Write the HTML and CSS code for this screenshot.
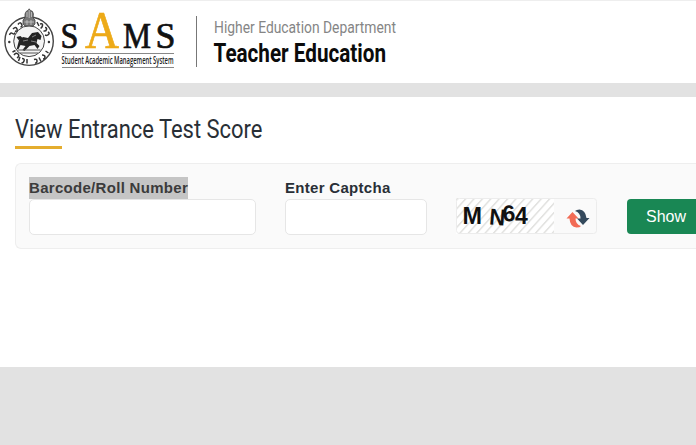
FILE: index.html
```
<!DOCTYPE html>
<html lang="en">
<head>
<meta charset="utf-8">
<title>Teacher Education - SAMS</title>
<link rel="stylesheet" href="styles.css">
</head>
<body>
<header class="header">
  <svg class="emblem" viewBox="0 0 54 62" width="54" height="62" aria-label="Emblem">
    <circle cx="27.1" cy="34.2" r="24.2" fill="#fff" stroke="#444" stroke-width="1.4"/>
    <circle cx="27.1" cy="34.2" r="15.4" fill="#f4f4f4" stroke="#444" stroke-width="1"/>
    <g fill="none" stroke="#333" stroke-width="1.5">
      <path d="M7.500 28q1-3 3-1.500t2.500-1M11 22q3-3 4 0t-2 2M16 17.500q2-3 3.500-.5t-1 3M35 15l2 4M38 17q3-1 2.500 1.500t-2 2.500M43 20.500q2 0 1.500 2t-3 1.500M46 25q2 1 .5 2.500t-3.500 .5"/>
      <path d="M10.500 45l3-1.500M12 48q2-3 4-1t-1 4M18 50l-1.500 4M20 51.500q3 0 2 2.500t-2.500 1.500M25 52v4.500M32 52.500q3-1 3 1.500t-2 2M37 50.500l2 4M40 48q3 0 3 2t-2 2M43.500 44l3 2"/>
    </g>
    <circle cx="7.300" cy="35" r="1.2" fill="#333"/><circle cx="46.900" cy="35" r="1.2" fill="#333"/>
    <path d="M23 7q1-3.500 3-3.500l1.200-1.700 1.200 1.700q2.600 0 3 3.500l-.4 4 2 2v4l-2 2h-8l-2-2v-4l2-2z" fill="#777" stroke="#444" stroke-width=".8"/>
    <path d="M25 5v5M27.200 3v8M29.500 5v5M22.500 15h9.500M25 13v5M29 13v5" stroke="#ccc" stroke-width=".8"/>
    <path d="M15 41l2-8 4-3 5 1 4-5 6-1 3.500 4-1 4-3-1-1 4 3 3-2 3-3-4-5 1-5 5-2-1 3-4-5-1-2 4h-1.500zM14.500 30l4-1 2 2-4 2z" fill="#252525"/>
    <path d="M15.500 43h23M18 46h18" stroke="#555" stroke-width="1.1"/>
    <path d="M21 34l5-1M30 30l4-2M29 34l5 1" stroke="#aaa" stroke-width=".7"/>
  </svg>
  <svg class="sams" viewBox="0 0 116 62" width="116" height="62">
    <g class="sams-letters">
      <text x="1.500" y="40.500" font-size="36" textLength="18" lengthAdjust="spacingAndGlyphs">S</text>
      <text class="sams-a" x="26" y="40.500" font-size="53" textLength="34" lengthAdjust="spacingAndGlyphs">A</text>
      <text x="64" y="40.500" font-size="36" textLength="28" lengthAdjust="spacingAndGlyphs">M</text>
      <text x="96.500" y="40.500" font-size="36" textLength="20" lengthAdjust="spacingAndGlyphs">S</text>
    </g>
    <path d="M3 46.500h112M3 60.500h112" stroke="#888" stroke-width="1"/>
    <text class="sams-name" x="2.500" y="57.400" textLength="112" lengthAdjust="spacingAndGlyphs">Student Academic Management System</text>
  </svg>
  <div class="divider"></div>
  <svg class="titles" viewBox="0 0 200 56" width="200" height="56">
    <text class="dept" x="0" y="20.800" textLength="182" lengthAdjust="spacingAndGlyphs">Higher Education Department</text>
    <text class="portal" x="-.5" y="50" textLength="172.500" lengthAdjust="spacingAndGlyphs">Teacher Education</text>
  </svg>
</header>
<main class="content">
  <h1 class="heading">
    <svg viewBox="0 0 260 32" width="260" height="32">
      <text x="0" y="24.300" textLength="247.500" lengthAdjust="spacingAndGlyphs">View Entrance Test Score</text>
    </svg>
  </h1>
  <form class="panel">
    <div class="field roll">
      <label for="roll"><span class="selected">Barcode/Roll Number</span></label>
      <input id="roll" type="text">
    </div>
    <div class="field captcha">
      <label for="captcha">Enter Captcha</label>
      <input id="captcha" type="text">
    </div>
    <div class="captcha-box">
      <svg viewBox="0 0 141 36" width="141" height="36">
        <defs>
          <pattern id="hatch" width="8.400" height="9" patternUnits="userSpaceOnUse" patternTransform="skewX(-42)">
            <path d="M2 0v9" stroke="#e3e3e1" stroke-width="2.200"/>
          </pattern>
        </defs>
        <rect width="98" height="36" fill="#fff"/>
        <rect width="98" height="36" fill="url(#hatch)"/>
        <rect x=".5" y=".5" width="140" height="35" rx="3" fill="none" stroke="#ececec"/>
        <g class="code">
          <text x="6.500" y="26" textLength="19.500" lengthAdjust="spacingAndGlyphs">M</text>
          <text x="33.500" y="27" textLength="16" lengthAdjust="spacingAndGlyphs" transform="rotate(5 41 18)">N</text>
          <text x="46.500" y="23.500" transform="rotate(-4 52 16)">6</text>
          <text x="59" y="26">4</text>
        </g>
        <path d="M110.500 20.500l6-6.500 6 6.500h-3q0 6 5.500 7.500-1 1.500-4.500 1.500-6.500-.5-7-9z" fill="#f26c56"/>
        <path d="M133.500 20l-6.500 7-6-6.500h3.500q0-6-5.500-7.500 1.500-1.500 4.500-1.500 6 .5 7 8.500z" fill="#34495c"/>
      </svg>
    </div>
    <button type="button" class="show">Show</button>
  </form>
</main>
</body>
</html>
```
FILE: styles.css
```
* { box-sizing: border-box; }

body {
  margin: 0;
  height: 445px;
  overflow: hidden;
  background: #e2e2e2;
  color: #292f36;
  font-family: "Liberation Sans", Arial, sans-serif;
}

svg { overflow: visible; }

.header {
  display: flex;
  align-items: flex-start;
  height: 83px;
  padding: 6px 0 0 2px;
  background: #fff;
  border-top: 1px solid #eee;
}

.emblem { margin-top: 0; }
.sams { margin-left: 3px; }

.sams-letters {
  font-family: "Liberation Serif", serif;
  fill: #111;
  stroke: #111;
  stroke-width: .7;
}

.sams-a { fill: #edaa18; stroke: #edaa18; }

.sams-name {
  font: 600 11px "Open Sans", sans-serif;
  fill: #222;
}

.divider {
  width: 1px;
  height: 51px;
  margin: 9px 17px 0 21px;
  background: #777;
}

.titles { margin-top: 5px; }
.dept { font: 400 16.5px Roboto, sans-serif; fill: #858585; }
.portal { font: 700 25.5px Roboto, sans-serif; fill: #0b0b0b; }

.content {
  height: 270px;
  margin-top: 14px;
  padding: 17px 0 0 15px;
  background: #fff;
}

.heading {
  height: 35px;
  margin: 0 0 14px;
  background: linear-gradient(#e4ad2f, #e4ad2f) 0 32px / 47px 3px no-repeat;
}

.heading svg { display: block; }
.heading text { font: 400 25.5px Roboto, sans-serif; fill: #292f36; }

.panel {
  display: flex;
  height: 86px;
  padding: 13px 0 0 13px;
  background: #fafafa;
  border: 1px solid #eee;
  border-right: 0;
  border-radius: 6px 0 0 6px;
}

.field { display: flex; flex: none; flex-direction: column; }
.roll { width: 227px; margin-right: 29px; }
.captcha { width: 142px; margin-right: 29px; }

label {
  height: 22px;
  font-size: 15px;
  font-weight: 700;
  line-height: 22px;
  letter-spacing: .3px;
  white-space: nowrap;
}

.selected {
  display: inline-block;
  height: 22px;
  background: #c5c5c5;
  color: #3b3b3b;
}

input {
  width: 100%;
  height: 36px;
  border: 1px solid #e6e6e6;
  border-radius: 5px;
  background: #fff;
}

.captcha-box { flex: none; height: 36px; margin: 21px 30px 0 0; }
.captcha-box svg { display: block; }

.code {
  font: 700 23px "Liberation Sans", Arial, sans-serif;
  fill: #111;
}

.show {
  flex: 1;
  height: 35px;
  margin-top: 22px;
  padding: 0 0 0 19px;
  border: 0;
  border-radius: 4px 0 0 4px;
  background: #198754;
  color: #fff;
  font: 16px "Liberation Sans", Arial, sans-serif;
  text-align: left;
}
```
